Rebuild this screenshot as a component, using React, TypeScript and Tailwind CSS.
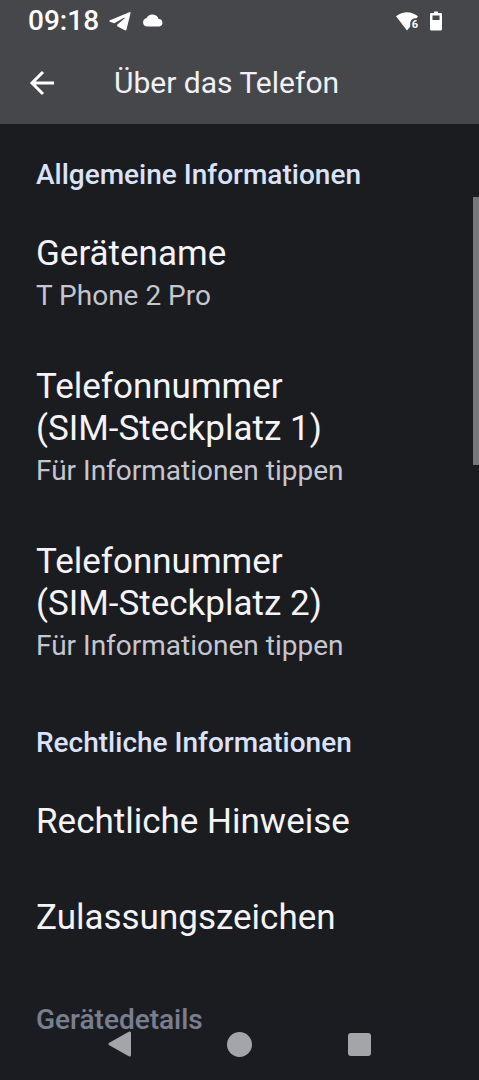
import clsx from "clsx";

interface Preference {
  title: string;
  slot?: string;
  summary?: string;
}

interface PreferenceGroup {
  heading: string;
  items: Preference[];
}

const GROUPS: PreferenceGroup[] = [
  {
    heading: "Allgemeine Informationen",
    items: [
      { title: "Gerätename", summary: "T Phone 2 Pro" },
      { title: "Telefonnummer", slot: "(SIM-Steckplatz 1)", summary: "Für Informationen tippen" },
      { title: "Telefonnummer", slot: "(SIM-Steckplatz 2)", summary: "Für Informationen tippen" },
    ],
  },
  {
    heading: "Rechtliche Informationen",
    items: [{ title: "Rechtliche Hinweise" }, { title: "Zulassungszeichen" }],
  },
  { heading: "Gerätedetails", items: [] },
];

function StatusBar() {
  return (
    <div className="flex h-[42px] items-center pl-7 pr-[37px] text-white">
      <span className="text-[28px] leading-[42px] font-medium">09:18</span>
      <svg viewBox="0 0 22 20" className="ml-[10px] h-5 w-[22px]" fill="currentColor" aria-hidden="true">
        <path d="M20.300 1.200 1 9.200c-.9.4-.9 1.300 0 1.600l4.300 1.500L15 6.800c.7-.4 1.200 0 .7.500l-7.600 6.500.1 1.400 7.600 4.100c.8.5 1.500.2 1.700-.8L21.500 2.200c.2-1-.4-1.400-1.200-1z" />
      </svg>
      <svg viewBox="0 0 22 14" className="ml-[11px] h-[14px] w-[22px]" fill="currentColor" aria-hidden="true">
        <path d="M4.800 12.500A4.200 4.200 0 0 1 4.500 4.200 6.600 6.600 0 0 1 16.600 5 3.800 3.800 0 0 1 17.500 12.500z" />
      </svg>
      <div className="ml-auto flex items-center gap-3">
        <div className="relative">
          <svg viewBox="0 0 22 19" className="h-[19px] w-[22px]" fill="currentColor" aria-hidden="true">
            <path d="M0 4.300Q11 -3.800 22 4.300L20.500 6.200Q14.800 6 14.200 11V14.500L11 18.500z" />
          </svg>
          <span className="absolute right-0 bottom-0 text-[11px] leading-3 font-bold">6</span>
        </div>
        <svg viewBox="0 0 12 20" className="h-5 w-3" fill="currentColor" aria-hidden="true">
          <path fillRule="evenodd" d="M4 .5h4V2h2.700Q12 2 12 3.300V18.200Q12 19.500 10.700 19.500H1.300Q0 19.500 0 18.200V3.300Q0 2 1.300 2H4zM2.500 4.500V9h7V4.500z" />
        </svg>
      </div>
    </div>
  );
}

function AppBar() {
  return (
    <div className="flex h-[82px] items-center pl-[29px]">
      <button type="button" aria-label="Zurück" className="text-white">
        <svg viewBox="0 0 26 26" className="size-[26px]" fill="none" stroke="currentColor" strokeWidth="3" aria-hidden="true">
          <path d="M25 13H3M14 2 3 13l11 11" />
        </svg>
      </button>
      <h1 className="ml-[59px] text-[30px] leading-10 text-[#f1f0f7]">Über das Telefon</h1>
    </div>
  );
}

function PreferenceRow({ title, slot, summary }: Preference) {
  return (
    <li>
      <button type="button" className="block w-full px-9 py-[27px] text-left">
        <span className="block text-[35px] leading-[42px] text-[#f4f3fa]">
          {title}
          {slot && <> <span className="whitespace-nowrap">{slot}</span></>}
        </span>
        {summary && <span className="mt-1 block text-[28px] leading-[33px] text-[#c5c6d0]">{summary}</span>}
      </button>
    </li>
  );
}

function NavigationBar() {
  return (
    <nav className="absolute inset-x-0 bottom-0 flex h-[72px] bg-[#1b1b21]/50 px-[12.5%] text-[#a4a5a9]">
      <button type="button" aria-label="Zurück" className="flex flex-1 items-center justify-center">
        <svg viewBox="0 0 26 26" className="size-[26px]" fill="currentColor" stroke="currentColor" strokeWidth="3" strokeLinejoin="round" aria-hidden="true">
          <path d="M3 13 22.500 2v22z" />
        </svg>
      </button>
      <button type="button" aria-label="Startseite" className="flex flex-1 items-center justify-center">
        <span className="size-[25px] rounded-full bg-current" />
      </button>
      <button type="button" aria-label="Übersicht" className="flex flex-1 items-center justify-center">
        <span className="size-[23px] rounded-[3px] bg-current" />
      </button>
    </nav>
  );
}

export default function App() {
  return (
    <div className="relative flex h-screen flex-col overflow-hidden bg-[#1b1c20] font-['Roboto',sans-serif]">
      <header className="shrink-0 bg-[#46474b]">
        <StatusBar />
        <AppBar />
      </header>
      <main className="relative min-h-0 flex-1 overflow-hidden">
        {GROUPS.map((group, i) => (
          <section key={group.heading}>
            <h2
              className={clsx(
                "px-9 pb-[15px] text-[28px] leading-[33px] font-medium text-[#d9e2ff]",
                i === 0 ? "pt-[34px]" : "pt-[37px]"
              )}
            >
              {group.heading}
            </h2>
            <ul>
              {group.items.map((item) => (
                <PreferenceRow key={item.slot ?? item.title} {...item} />
              ))}
            </ul>
          </section>
        ))}
        {/* scroll thumb */}
        <div className="absolute top-[73px] right-0 h-[268px] w-[6px] bg-[#76777b]" />
      </main>
      <NavigationBar />
    </div>
  );
}
